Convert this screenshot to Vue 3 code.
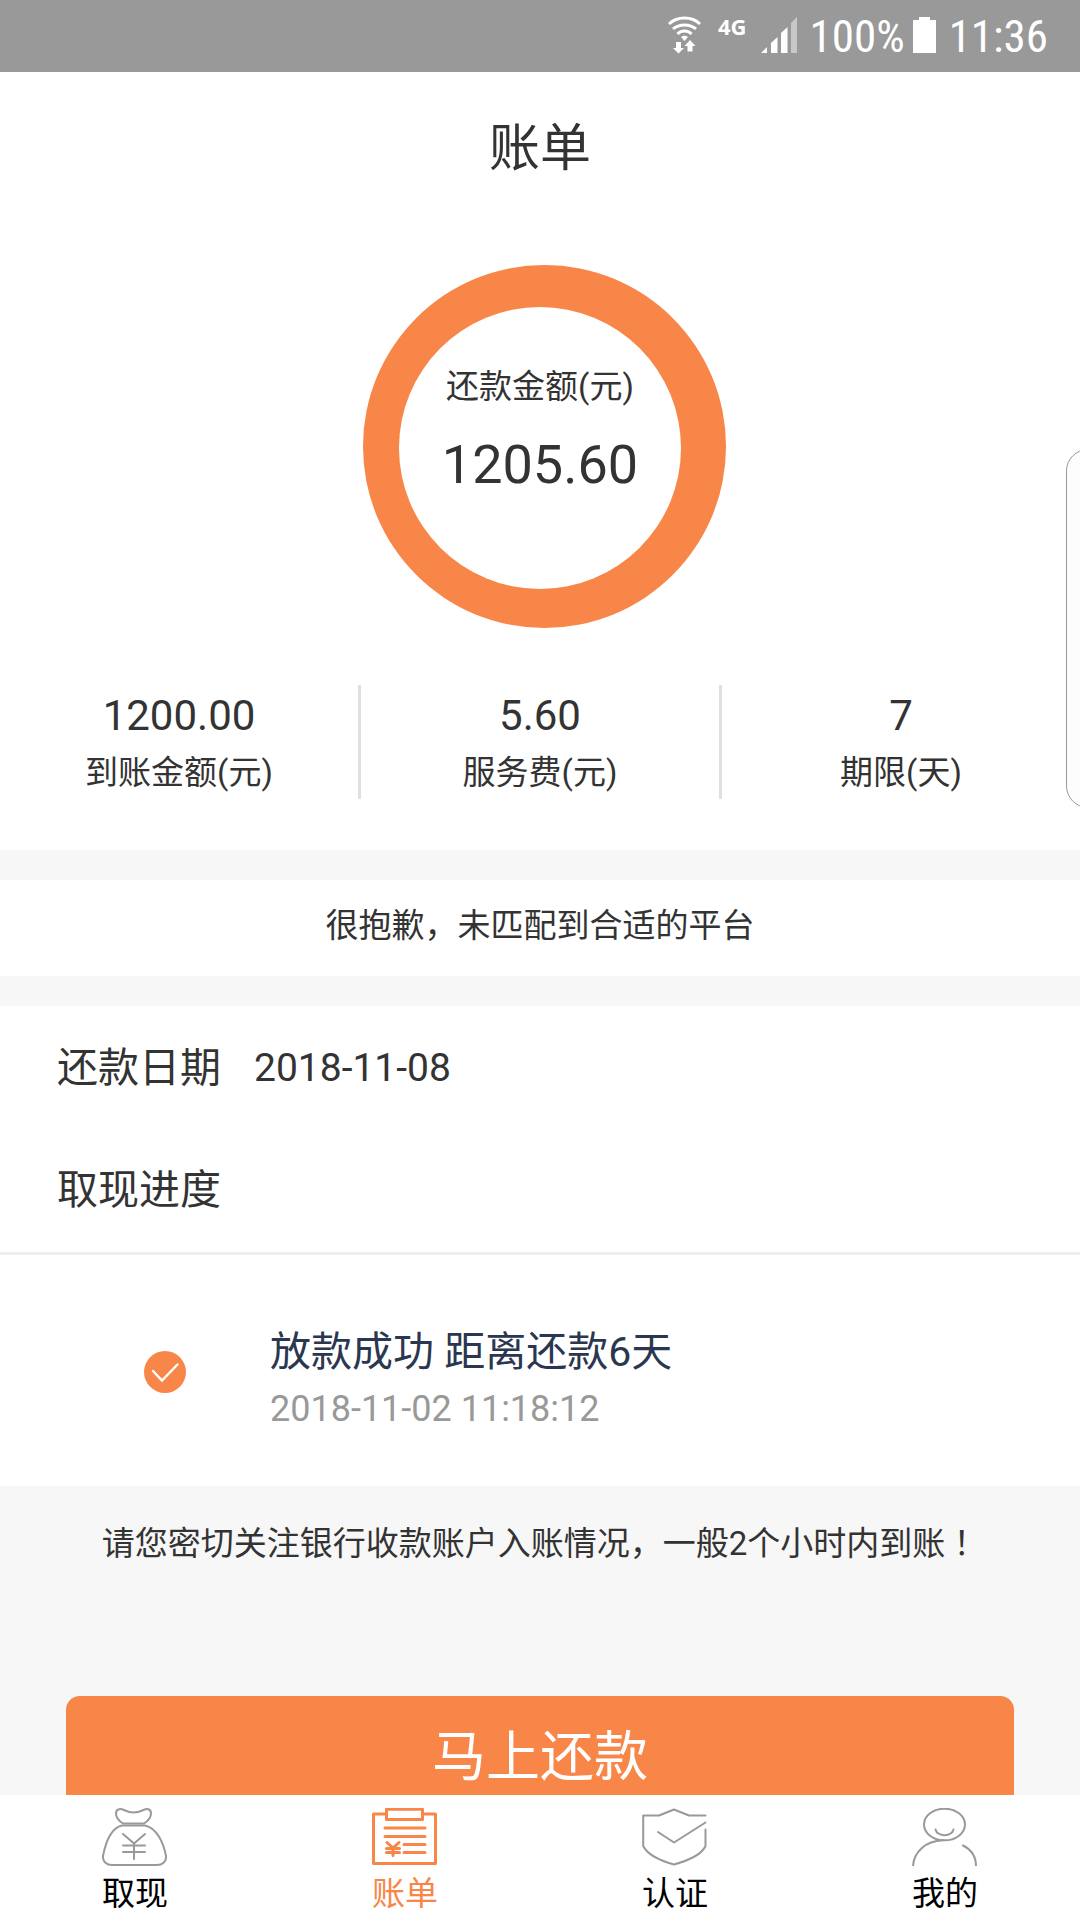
<script setup>
const stats = [
  { value: '1200.00', label: '到账金额(元)' },
  { value: '5.60', label: '服务费(元)' },
  { value: '7', label: '期限(天)' },
]

const tabs = [
  {
    label: '取现',
    paths: [
      'M21 15.5C17 13 14 9 14 5.5C14 1.5 17.5 0 22 2C27 4.3 29 4.6 31.5 4.6C34 4.6 37 4 41.5 2C46 0 49 1.5 49 5.5C49 9 46 13 42 15.5Z',
      'M20 17.5H43C55 20 61.5 35 64 48C64.5 54 60 57 55 57H10C5 57 .5 54 1 48C3.5 35 9 20 20 17.5Z',
      'M21 26L32 35.5L43 26M32 35.5V51M21 37.5H43M21 44H43',
    ],
  },
  {
    label: '账单',
    active: true,
    paths: [
      'M14.5 6H1.5V55.5H63.5V6H50.5',
      'M14.5 1.2H50.5V11.5H14.5Z',
      'M13 20H53M13 28.5H53M32 36.5H53M32 44.5H53',
      'M15 34.5L21 40L27 34.5M21 40V47.5M14.5 40.5H27.5M14.5 44.5H27.5',
    ],
  },
  {
    label: '认证',
    paths: [
      'M63.5 7.5H47L32 1.5L17 7.5H1.2V38C5 46 16 52 32 56.5C48 52 60 46 63.5 38V21.5',
      'M16 24L32 34.5L63.5 14.5',
    ],
  },
  {
    label: '我的',
    paths: [
      'M53 16.5A20.5 15.8 0 1 1 12 16.5A20.5 15.8 0 1 1 53 16.5',
      'M23.5 21.5C25 29 40 29 41.5 21.5',
      'M1 58C2 44 13 33 31 32.3M51 37.5C60 42 64 50 64 58',
    ],
  },
]
</script>

<template>
  <div class="app">
    <div class="status-bar">
      <svg class="wifi" width="33" height="38" viewBox="0 0 33 38" aria-hidden="true">
        <g fill="none" stroke="#fff" stroke-width="3">
          <path d="M1 8C9 0 24 0 32 8" />
          <path d="M5 13C11 7.5 22 7.5 28 13" />
          <path d="M9.5 18C13 14 20 14 23.5 18" />
        </g>
        <path fill="#fff" d="M13 21Q16.5 18.5 20 21L16.5 25Z" />
        <path fill="#fff" d="M8 26H13V32H16L10.5 37.5L5 32H8ZM19.5 35.5H24.5V30H27.5L22 24L16.5 30H19.5Z" />
      </svg>
      <span class="network">4G</span>
      <svg class="signal" width="36" height="36" viewBox="0 0 36 36" aria-hidden="true">
        <path fill="#fff" d="M0 36L6 30V36ZM10 36V26L16.5 20V36ZM20 36V16L26.5 10V36Z" />
        <path fill="#c8c8c8" d="M30 36V6L36 0V36Z" />
      </svg>
      <span class="status-text">100%</span>
      <svg class="battery" width="23" height="36" viewBox="0 0 23 36" aria-hidden="true">
        <path fill="#fff" d="M6 0H17V3H23V36H0V3H6Z" />
      </svg>
      <span class="status-text">11:36</span>
    </div>

    <header class="title-bar"><h1>账单</h1></header>

    <main>
      <section class="summary">
        <svg class="ring" viewBox="0 0 363 363" aria-hidden="true">
          <circle cx="181.5" cy="181.5" r="181.5" fill="#f88648" />
          <circle cx="177" cy="183" r="141" fill="#fff" />
        </svg>
        <div class="amount">
          <span class="label">还款金额(元)</span>
          <strong>1205.60</strong>
        </div>
      </section>

      <dl class="stats">
        <div v-for="s in stats" :key="s.label" class="stat">
          <dd>{{ s.value }}</dd>
          <dt>{{ s.label }}</dt>
        </div>
      </dl>

      <p class="notice">很抱歉，未匹配到合适的平台</p>

      <section class="details">
        <div class="row"><span>还款日期</span><time>2018-11-08</time></div>
        <h2 class="row">取现进度</h2>
      </section>

      <section class="progress">
        <svg class="check" width="42" height="42" viewBox="0 0 42 42" aria-hidden="true">
          <circle cx="21" cy="21" r="21" fill="#f88648" />
          <path d="M9 20L18 29.5L33.5 13.5" fill="none" stroke="#fff" stroke-width="2.5" stroke-linecap="round" />
        </svg>
        <div>
          <p class="step">放款成功 距离还款6天</p>
          <time class="step-time">2018-11-02 11:18:12</time>
        </div>
      </section>

      <section class="action">
        <p>请您密切关注银行收款账户入账情况，一般2个小时内到账<span class="mark">！</span></p>
        <button type="button">马上还款</button>
      </section>
    </main>

    <aside class="edge-handle" aria-hidden="true"></aside>

    <nav class="tab-bar">
      <a v-for="t in tabs" :key="t.label" href="#" :class="{ active: t.active }">
        <svg width="65" height="58" viewBox="0 0 65 58" aria-hidden="true">
          <path v-for="d in t.paths" :key="d" :d="d" />
        </svg>
        <span>{{ t.label }}</span>
      </a>
    </nav>
  </div>
</template>

<style>
body {
  margin: 0;
  background: #f7f7f7;
}
</style>

<style scoped>
.app {
  position: relative;
  box-sizing: border-box;
  min-height: 100vh;
  padding-bottom: 125px;
  overflow-x: hidden;
  background: #f7f7f7;
  color: #333;
  font-family: Roboto, "Noto Sans CJK SC", sans-serif;
  font-size: 33px;
  line-height: 48px;
}
h1, h2, p, dl, dd {
  margin: 0;
  font-weight: 400;
}
.status-bar {
  display: flex;
  align-items: center;
  justify-content: flex-end;
  height: 72px;
  padding-right: 32px;
  background: #999;
  color: #fff;
}
.wifi {
  margin-bottom: 2px;
}
.network {
  margin: 0 14px 20px 17px;
  font: 700 22px/28px "Noto Sans", sans-serif;
}
.status-text {
  margin: 2px 0 0 13px;
  font-family: "Roboto Condensed", Roboto, sans-serif;
  font-size: 45px;
}
.signal, .battery {
  margin-bottom: 2px;
}
.battery {
  margin-left: 8px;
}
.title-bar {
  background: #fff;
}
h1 {
  padding: 41px 0 39px;
  font-size: 51px;
  line-height: 72px;
  text-align: center;
}
.summary {
  display: grid;
  justify-items: center;
  padding: 41px 0 57px;
  background: #fff;
}
.ring, .amount {
  grid-area: 1 / 1;
}
.ring {
  width: 363px;
  height: 363px;
  margin-left: 9px;
}
.amount {
  z-index: 1;
  display: flex;
  flex-direction: column;
  gap: 22px;
  padding-top: 98px;
  text-align: center;
}
.amount strong {
  font-size: 54px;
  font-weight: 400;
  line-height: 64px;
}
.stats {
  display: flex;
  padding-bottom: 51px;
  background: #fff;
}
.stat {
  box-sizing: border-box;
  display: flex;
  flex: 1;
  flex-direction: column;
  height: 114px;
  padding-top: 7px;
  border-right: 3px solid #e0e0e0;
  text-align: center;
}
.stat:last-child {
  border-right: 0;
}
.stat dd {
  font-size: 42px;
}
.stat dt {
  padding-top: 9px;
}
.notice {
  margin: 30px 0;
  padding: 22px 0 26px;
  background: #fff;
  text-align: center;
}
.details {
  padding: 1px 0;
  border-bottom: 3px solid #eee;
  background: #fff;
}
.row {
  display: flex;
  align-items: center;
  gap: 33px;
  height: 122px;
  padding: 0 57px;
  font-size: 41px;
}
.row time {
  font-size: 39px;
}
.progress {
  display: flex;
  align-items: flex-start;
  gap: 84px;
  padding: 67px 0 50px 144px;
  background: #fff;
}
.check {
  margin-top: 29px;
}
.step {
  color: #2b3750;
  font-size: 41px;
  line-height: 60px;
}
.step-time {
  display: block;
  color: #999;
  font-size: 36px;
  line-height: 54px;
}
.action {
  padding: 34px 66px 0;
  text-align: center;
}
.mark {
  font-family: "Noto Sans CJK TC", sans-serif;
  line-height: 1;
}
button {
  width: 100%;
  height: 123px;
  margin-top: 128px;
  padding: 0;
  border: 0;
  border-radius: 14px;
  background: #f88648;
  color: #fff;
  font: inherit;
  font-size: 54px;
}
.edge-handle {
  position: absolute;
  top: 449px;
  right: -31px;
  box-sizing: border-box;
  width: 45px;
  height: 359px;
  border: 1px solid #999;
  border-radius: 22px;
  background: #fdfdfd;
}
.tab-bar {
  position: fixed;
  right: 0;
  bottom: 0;
  left: 0;
  display: flex;
  height: 125px;
  background: #fff;
}
.tab-bar a {
  display: flex;
  flex: 1;
  flex-direction: column;
  align-items: center;
  padding-top: 13px;
  color: #000;
  text-decoration: none;
}
.tab-bar svg {
  margin: 0 1px 4px 0;
  fill: none;
  stroke: #999;
  stroke-width: 2;
  stroke-linecap: round;
  stroke-linejoin: round;
}
.tab-bar .active {
  color: #f88648;
}
.tab-bar .active svg {
  stroke: #f88648;
  stroke-width: 3;
}
</style>
